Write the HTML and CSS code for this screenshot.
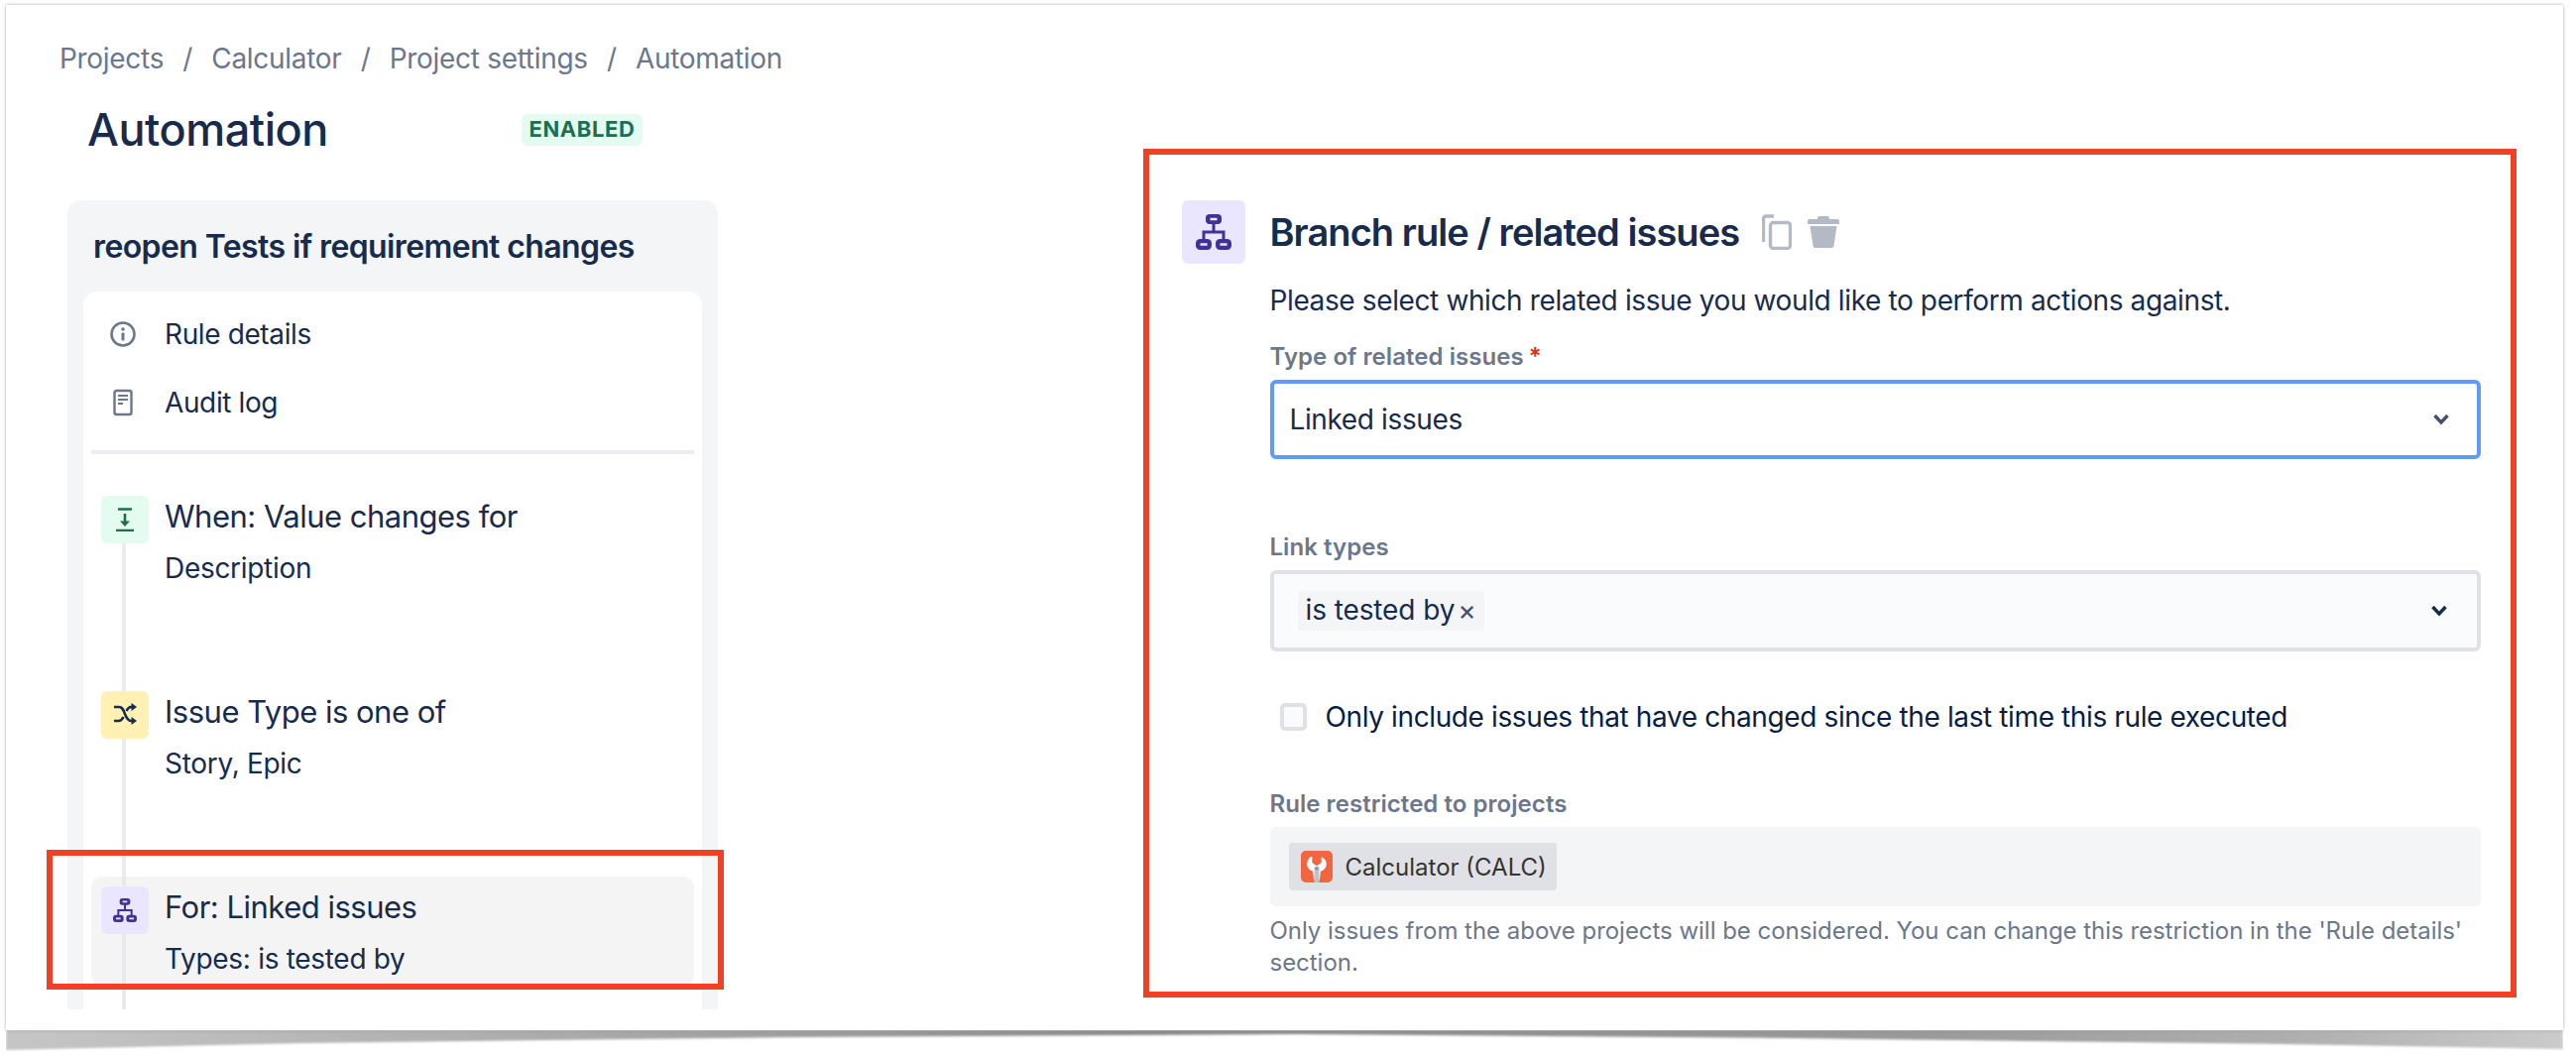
FILE: index.html
```html
<!DOCTYPE html>
<html lang="en">
<head>
<meta charset="utf-8">
<title>Automation</title>
<link rel="stylesheet" href="styles.css">
</head>
<body>
<main class="sheet">
  <section class="left">
    <nav class="crumbs">
      <span>Projects</span><span class="sep">/</span><span>Calculator</span><span class="sep">/</span><span>Project settings</span><span class="sep">/</span><span>Automation</span>
    </nav>
    <header class="page-head">
      <h1 class="page-title">Automation</h1>
      <span class="badge">ENABLED</span>
    </header>
    <div class="card">
      <h2 class="card-title">reopen Tests if requirement changes</h2>
      <div class="inner">
        <div class="nav-row">
          <svg class="nav-icon" viewBox="0 0 28 28"><circle cx="14" cy="14" r="11.5" fill="none" stroke="#6b778c" stroke-width="2.6"/><circle cx="14" cy="9" r="1.8" fill="#6b778c"/><rect x="12.5" y="12.5" width="3" height="8" rx="1" fill="#6b778c"/></svg>
          <span>Rule details</span>
        </div>
        <div class="nav-row">
          <svg class="nav-icon" viewBox="0 0 28 28"><rect x="5.5" y="2" width="17" height="24" rx="2" fill="none" stroke="#6b778c" stroke-width="2.4"/><path d="M9 7h10M9 11h10M9 15h5" stroke="#6b778c" stroke-width="2.2"/></svg>
          <span>Audit log</span>
        </div>
        <div class="divider"></div>
        <div class="steps">
          <div class="step step-a">
            <span class="tile tile-green">
              <svg viewBox="0 0 24 24" class="tile-svg"><path d="M5 1.5h14M3 23h18" stroke="#216e4e" stroke-width="2.6"/><path d="M12 6v10" stroke="#216e4e" stroke-width="2.6"/><path d="M7 13.5h10L12 19z" fill="#216e4e"/></svg>
            </span>
            <div class="step-text"><div class="step-title">When: Value changes for</div><div class="step-sub">Description</div></div>
          </div>
          <div class="step step-b">
            <span class="tile tile-yellow">
              <svg viewBox="0 0 24 24" class="tile-svg"><path d="M1 4h5c3.500 0 4.500 3 6 7s3 7 6 7h2M1 18h5c2 0 3.500-2 4.500-4M13.500 8c1-2 2.500-4 4.500-4h2" fill="none" stroke="#172b4d" stroke-width="2.600"/><path d="M18.500 0l5.500 4-5.500 4zM18.500 14l5.500 4-5.500 4z" fill="#172b4d"/></svg>
            </span>
            <div class="step-text"><div class="step-title">Issue Type is one of</div><div class="step-sub">Story, Epic</div></div>
          </div>
          <div class="step step-c">
            <span class="tile tile-purple">
              <svg viewBox="0 0 36 36" class="tile-svg"><path d="M18 8v10M8 27v-9h20v9" fill="none" stroke="#403294" stroke-width="3"/><rect x="10" y="0" width="16" height="10" rx="4" fill="#403294"/><rect x="0" y="25" width="16" height="11" rx="4.500" fill="#403294"/><rect x="20" y="25" width="16" height="11" rx="4.500" fill="#403294"/><path d="M14.500 5h7M4.500 30.500h7M24.500 30.500h7" stroke="#eae6ff" stroke-width="2.400"/></svg>
            </span>
            <div class="step-text"><div class="step-title">For: Linked issues</div><div class="step-sub">Types: is tested by</div></div>
            <div class="callout"></div>
          </div>
        </div>
      </div>
    </div>
  </section>

  <section class="panel">
    <div class="panel-head">
      <span class="panel-tile">
        <svg viewBox="0 0 36 36" class="panel-svg"><path d="M18 8v10M8 27v-9h20v9" fill="none" stroke="#403294" stroke-width="3"/><rect x="10" y="0" width="16" height="10" rx="4" fill="#403294"/><rect x="0" y="25" width="16" height="11" rx="4.500" fill="#403294"/><rect x="20" y="25" width="16" height="11" rx="4.500" fill="#403294"/><path d="M14.500 5h7M4.500 30.500h7M24.500 30.500h7" stroke="#eae6ff" stroke-width="2.400"/></svg>
      </span>
      <h2 class="panel-title">Branch rule / related issues</h2>
      <svg class="copy" viewBox="0 0 30 36"><path d="M12 2H4a2.500 2.500 0 0 0-2.500 2.500V28" fill="none" stroke="#b3bac5" stroke-width="3.400"/><rect x="8.500" y="8.500" width="20" height="26" rx="3" fill="none" stroke="#b3bac5" stroke-width="3.400"/></svg>
      <svg class="trash" viewBox="0 0 32 32"><path d="M12 0h8a2 2 0 0 1 2 2v1h8a2 2 0 0 1 2 2v3H0V5a2 2 0 0 1 2-2h8V2a2 2 0 0 1 2-2z" fill="#b3bac5"/><path d="M2.500 10h27l-3 20a2.500 2.500 0 0 1-2.500 2H8a2.500 2.500 0 0 1-2.500-2z" fill="#b3bac5"/></svg>
    </div>
    <div class="panel-body">
      <p class="intro">Please select which related issue you would like to perform actions against.</p>
      <div class="label label-first">Type of related issues<span class="req">*</span></div>
      <div class="select select-focus">
        <span>Linked issues</span>
        <svg class="chev chev-first" viewBox="0 0 16 12"><path d="M1.500 2 8 9l6.500-7" fill="none" stroke="#42526e" stroke-width="3.400"/></svg>
      </div>
      <div class="label label-links">Link types</div>
      <div class="select select-multi">
        <span class="tag">is tested by<span class="tag-x">×</span></span>
        <svg class="chev" viewBox="0 0 16 12"><path d="M1.500 2 8 9l6.500-7" fill="none" stroke="#172b4d" stroke-width="3.400"/></svg>
      </div>
      <label class="check-row"><span class="checkbox"></span><span>Only include issues that have changed since the last time this rule executed</span></label>
      <div class="label label-rule">Rule restricted to projects</div>
      <div class="projects">
        <span class="chip">
          <svg class="chip-icon" viewBox="0 0 32 32"><rect width="32" height="32" rx="5" fill="#f1653f"/><path d="M10.500 3.500v7l5.500 4 5.500-4v-7c4 2 6 5.500 6 8.500 0 4.500-3 7.500-7 9l-1 10h-7l-1-10c-4-1.500-7-4.500-7-9 0-3 2-6.500 4-8.500z" fill="#fff" transform="translate(2.400 3) scale(.85)"/><rect x="13.500" y="16" width="5" height="16" fill="#b9c4cf"/><circle cx="16" cy="18" r="1.700" fill="#8a99a8"/></svg>
          <span>Calculator (CALC)</span>
        </span>
      </div>
      <p class="help">Only issues from the above projects will be considered. You can change this restriction in the 'Rule details' section.</p>
    </div>
  </section>
</main>
<svg class="curl" viewBox="0 0 2579 28" preserveAspectRatio="none" aria-hidden="true">
  <defs>
    <linearGradient id="curlg" x1="0" x2="1" y1="0" y2="0">
      <stop offset="0" stop-color="#c6c6c6"/><stop offset=".2" stop-color="#adadad"/><stop offset=".45" stop-color="#8c8c8c"/><stop offset=".75" stop-color="#9a9a9a"/><stop offset=".9" stop-color="#b0b0b0"/><stop offset="1" stop-color="#cbcbcb"/>
    </linearGradient>
    <filter id="curlb" x="-1%" y="-50%" width="102%" height="200%"><feGaussianBlur stdDeviation="1"/></filter>
  </defs>
  <polygon points="0,0 2579,0 2579,19 2300,14 1800,8 1300,4 800,7 300,13 0,20" fill="url(#curlg)" filter="url(#curlb)"/>
</svg>
</body>
</html>
```

FILE: styles.css
```css
* { box-sizing: border-box; }
html, body { margin: 0; padding: 0; background: #fff; }
body {
  font-family: Inter, "Liberation Sans", sans-serif;
  color: #172b4d;
  font-size: 28px;
  letter-spacing: -.38px;
  overflow: hidden;
  padding: 5px 13px 0 6px;
}
.sheet {
  display: flex;
  height: 1034px;
  background: #fff;
  box-shadow: 0 0 3px rgba(0,0,0,.35);
  overflow: hidden;
  position: relative;
}
.curl { display: block; width: 100%; height: 28px; }

/* left */
.left { width: 1146.5px; flex: none; display: flex; flex-direction: column; }
.crumbs { display: flex; margin: 36px 0 0 54px; font-size: 28px; letter-spacing: -.3px; line-height: 36px; color: #6b778c; }
.sep { margin: 0 19.2px; }
.page-head { display: flex; align-items: center; margin: 20px 0 0 82px; height: 68px; }
.page-title { margin: 0; width: 438px; font-size: 45px; line-height: 60px; font-weight: 500; letter-spacing: -.45px; color: #172b4d; }
.badge { width: 122px; height: 32px; background: #e3fcef; color: #216e4e; border-radius: 6px; font-size: 22px; font-weight: 700; line-height: 30px; text-align: center; letter-spacing: .6px; }
.card { margin: 37px 0 0 62px; width: 656px; height: 816px; background: #f4f5f7; border-radius: 14px 14px 0 0; padding: 0 16px; }
.card-title { margin: 0; height: 92px; line-height: 94px; padding-left: 10px; font-size: 32px; font-weight: 600; letter-spacing: -.6px; white-space: nowrap; }
.inner { background: #fff; border-radius: 14px 14px 0 0; height: 724px; padding: 8px 8px 0; }
.nav-row { display: flex; align-items: center; height: 69px; font-size: 28px; padding-left: 18px; }
.nav-icon { width: 28px; height: 28px; margin-right: 28px; flex: none; }
.divider { height: 4px; background: #ebecf0; margin-top: 14px; }
.steps { margin-top: 42px; position: relative; }
.step { display: flex; position: relative; padding-left: 10px; gap: 16px; }
.step::before { content: ""; position: absolute; left: 31px; top: 48px; width: 4px; bottom: 0; background: #ebecf0; }
.step-a { height: 197px; }
.step-b { height: 197px; }
.step-c { margin-top: -10px; padding-top: 10px; height: 134px; }
.step-c::after { content: ""; position: absolute; left: 0; right: 0; top: 0; height: 110px; background: #f4f4f5; border-radius: 10px; z-index: 0; }
.step-c::before { top: 0; z-index: 1; background: #e8e9ec; }
.tile { width: 48px; height: 48px; border-radius: 6px; display: flex; align-items: center; justify-content: center; flex: none; position: relative; z-index: 2; }
.tile-green { background: #e3fcef; }
.tile-yellow { background: #fff0b3; }
.tile-purple { background: #eae6ff; }
.tile-svg { width: 24px; height: 24px; }
.step-text { position: relative; z-index: 2; }
.step-title { font-size: 31px; letter-spacing: -.5px; line-height: 42px; }
.step-sub { font-size: 28px; letter-spacing: -.3px; line-height: 36px; margin-top: 13px; }
.callout { position: absolute; left: -45px; right: -30px; top: -27px; height: 141px; border: 6px solid #ef4126; z-index: 3; }

/* right */
.panel { width: 1385px; height: 856px; flex: none; margin-top: 145px; border: 6px solid #ef4126; padding: 46px 30px 0 33px; }
.panel-head { display: flex; align-items: center; height: 64px; }
.panel-tile { width: 64px; height: 64px; background: #eae6ff; border-radius: 6px; display: flex; align-items: center; justify-content: center; flex: none; }
.panel-svg { width: 36px; height: 36px; }
.panel-title { margin: 0 0 0 25px; font-size: 38px; font-weight: 600; letter-spacing: -.93px; line-height: 64px; white-space: nowrap; }
.copy { width: 30px; height: 36px; margin-left: 23px; }
.trash { width: 32px; height: 32px; margin-left: 16px; }
.panel-body { padding-left: 89px; }
.intro { margin: 18px 0 0; font-size: 28px; line-height: 38px; }
.label { font-size: 24px; font-weight: 600; letter-spacing: .05px; color: #6b778c; line-height: 32px; }
.label-first { margin-top: 22px; }
.req { color: #de350b; margin-left: 5px; }
.select { display: flex; align-items: center; justify-content: space-between; border-radius: 6px; margin-top: 7px; }
.select-focus { height: 80px; border: 4px solid #629af5; padding: 0 16px; font-size: 28px; }
.label-links { margin-top: 73px; }
.select-multi { height: 82px; border: 4px solid #dfe1e6; background: #fafbfc; padding: 0 30px 0 24px; }
.tag { display: inline-flex; align-items: center; height: 40px; background: #f4f5f7; border-radius: 4px; padding: 0 8px 2px; font-size: 28px; letter-spacing: -.1px; }
.tag-x { font-size: 28px; margin-left: 3px; color: #42526e; }
.check-row { display: flex; align-items: center; margin: 52px 0 0 10px; height: 28px; color: #091e42; font-size: 28px; white-space: nowrap; }
.checkbox { width: 27px; height: 28px; border: 4px solid #dfe1e6; border-radius: 5px; background: #fafbfc; margin-right: 19px; flex: none; }
.label-rule { margin-top: 58px; }
.projects { margin-top: 7px; height: 80px; background: #f4f5f7; border-radius: 6px; padding: 16px 0 0 19px; }
.chip { display: inline-flex; align-items: center; height: 48px; width: 270px; background: #dfe1e6; border-radius: 4px; padding-left: 12px; font-size: 24px; letter-spacing: 0; color: #333; }
.chip-icon { width: 32px; height: 32px; margin-right: 13px; flex: none; }
.chev { width: 16px; height: 12px; }
.chev-first { margin-right: 12px; }
.help { margin: 9px 0 0; font-size: 24px; letter-spacing: -.03px; line-height: 32px; color: #6b778c; }
```
